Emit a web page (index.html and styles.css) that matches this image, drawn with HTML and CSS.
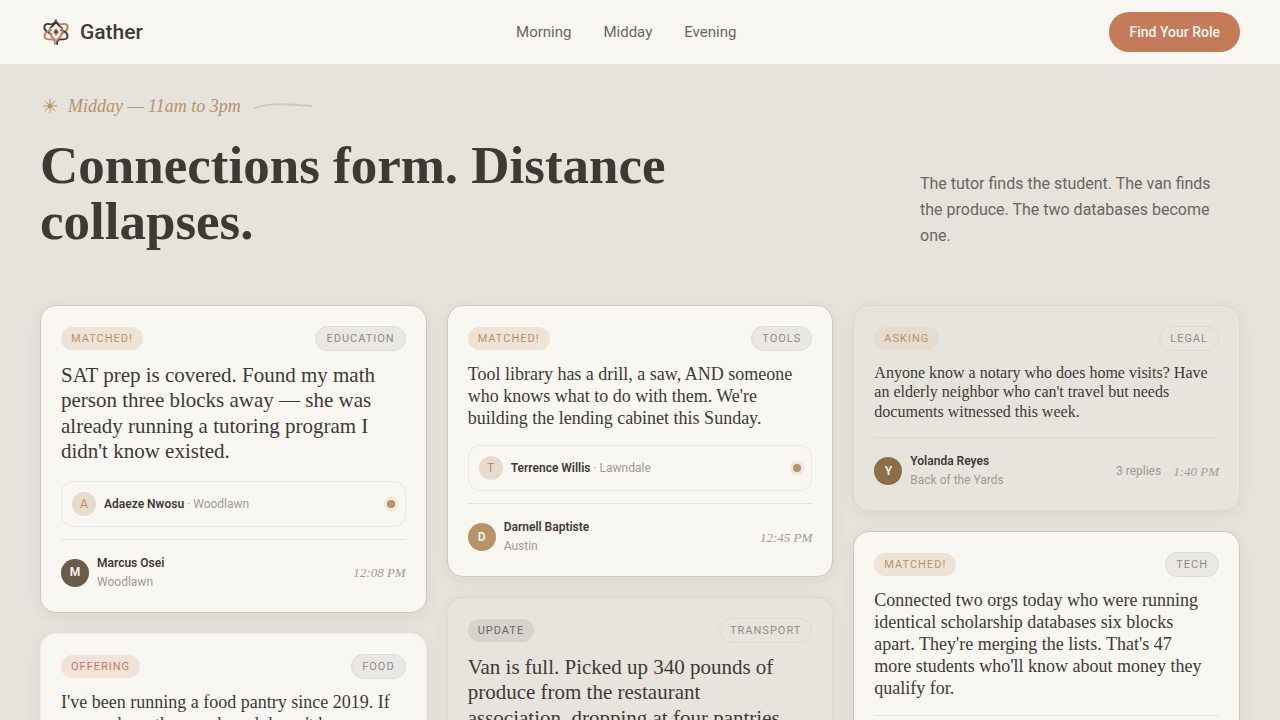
FILE: index.html
```html
<!DOCTYPE html>
<html lang="en">
<head>
<meta charset="utf-8">
<meta name="viewport" content="width=device-width, initial-scale=1">
<title>Gather</title>
<link rel="stylesheet" href="styles.css">
</head>
<body>
<header class="nav">
  <a class="brand" href="#">
    <svg class="brand-mark" viewBox="0 0 32 32" fill="none" stroke-width="1.8" stroke-linecap="round" aria-hidden="true">
      <path d="M16 4C15 8 12 9 9 8C4 7 3 12 6 15C7 16 9 17 11 18" stroke="#3d3a36"/>
      <path d="M16 4C17 8 20 9 23 8C28 7 29 12 26 15C25 16 23 17 21 18" stroke="#c47b5a"/>
      <path d="M11 14C7 15 3 18 5 22C7 25 12 22 14 24C15 25 15 26 15 28" stroke="#c47b5a"/>
      <path d="M21 14C25 15 29 18 27 22C25 25 20 22 18 24C17 25 17 26 17 28" stroke="#3d3a36"/>
      <path d="M10 12C12 11 14 9 16 6C18 9 20 11 22 12" stroke="#3d3a36"/>
      <path d="M10 12C9 15 10 18 11 20L15 24M22 12C23 15 22 18 21 20L17 24" stroke="#c47b5a"/>
      <path d="M16 12L19 16L16 20L13 16Z" fill="#c47b5a" stroke="none"/>
      <circle cx="16" cy="16" r="1.4" fill="#3d3a36"/>
    </svg>
    <span>Gather</span>
  </a>
  <nav class="links" aria-label="Times of day">
    <a href="#">Morning</a>
    <a href="#midday">Midday</a>
    <a href="#">Evening</a>
  </nav>
  <button class="cta" type="button">Find Your Role</button>
</header>

<main class="section" id="midday">
  <div class="eyebrow">
    <svg class="sun" viewBox="0 0 20 20" fill="none" stroke="#b8936a" stroke-linecap="round" aria-hidden="true">
      <circle cx="10" cy="10" r="2.4" fill="#b8936a" stroke="none"/>
      <path d="M10 3.500V16.500M3.500 10H16.500M5 5L15 15M5 15L15 5"/>
    </svg>
    <span>Midday — 11am to 3pm</span>
    <svg class="flourish" viewBox="0 0 60 8" fill="none" aria-hidden="true">
      <path d="M2 6C14 1 32 2 58 4" stroke="#d9c5b3" stroke-width="2" stroke-linecap="round"/>
    </svg>
  </div>
  <div class="heading">
    <h1>Connections form. Distance collapses.</h1>
    <p>The tutor finds the student. The van finds the produce. The two databases become one.</p>
  </div>

  <div class="board">
    <div class="column">
      <article class="card matched">
        <div class="tags"><span class="tag gold">Matched!</span><span class="topic">Education</span></div>
        <p class="quote large">SAT prep is covered. Found my math person three blocks away — she was already running a tutoring program I didn't know existed.</p>
        <div class="match"><span class="initial">A</span><span><strong>Adaeze Nwosu</strong> · Woodlawn</span><span class="dot"></span></div>
        <footer class="author"><span class="avatar umber">M</span><div><strong>Marcus Osei</strong><span>Woodlawn</span></div><time>12:08 PM</time></footer>
      </article>
      <article class="card">
        <div class="tags"><span class="tag clay">Offering</span><span class="topic">Food</span></div>
        <p class="quote">I've been running a food pantry since 2019. If anyone has other needs and doesn't have</p>
      </article>
    </div>

    <div class="column">
      <article class="card matched">
        <div class="tags"><span class="tag gold">Matched!</span><span class="topic">Tools</span></div>
        <p class="quote">Tool library has a drill, a saw, AND someone who knows what to do with them. We're building the lending cabinet this Sunday.</p>
        <div class="match"><span class="initial">T</span><span><strong>Terrence Willis</strong> · Lawndale</span><span class="dot"></span></div>
        <footer class="author"><span class="avatar ochre">D</span><div><strong>Darnell Baptiste</strong><span>Austin</span></div><time>12:45 PM</time></footer>
      </article>
      <article class="card quiet">
        <div class="tags"><span class="tag gray">Update</span><span class="topic">Transport</span></div>
        <p class="quote large inset">Van is full. Picked up 340 pounds of produce from the restaurant association, dropping at four pantries</p>
      </article>
    </div>

    <div class="column">
      <article class="card quiet">
        <div class="tags"><span class="tag gold">Asking</span><span class="topic">Legal</span></div>
        <p class="quote small">Anyone know a notary who does home visits? Have an elderly neighbor who can't travel but needs documents witnessed this week.</p>
        <footer class="author"><span class="avatar bronze">Y</span><div><strong>Yolanda Reyes</strong><span>Back of the Yards</span></div><span class="replies">3 replies</span><time>1:40 PM</time></footer>
      </article>
      <article class="card matched">
        <div class="tags"><span class="tag gold">Matched!</span><span class="topic">Tech</span></div>
        <p class="quote inset">Connected two orgs today who were running identical scholarship databases six blocks apart. They're merging the lists. That's 47 more students who'll know about money they qualify for.</p>
        <footer class="author"></footer>
      </article>
    </div>
  </div>
</main>
</body>
</html>
```
FILE: styles.css
```css
:root {
  --paper: #f9f7f2;
  --sand: #e6e2dc;
  --ink: #3d3a36;
  --muted: #6b6660;
  --faint: #a09b94;
  --gold: #b8936a;
  --clay: #c47b5a;
  --sans: "Roboto", "Liberation Sans", sans-serif;
  --serif: "Liberation Serif", serif;
}

* { box-sizing: border-box; }

body {
  margin: 0;
  background: var(--sand);
  color: var(--ink);
  font-family: var(--sans);
}

h1, p { margin: 0; }
a { color: inherit; text-decoration: none; }

.nav {
  display: flex;
  justify-content: space-between;
  align-items: center;
  padding: 12px 40px;
  background: #f8f7f2;
}

.brand {
  display: flex;
  align-items: center;
  gap: 8px;
  font-size: 21px;
  font-weight: 500;
}

.brand-mark { width: 32px; height: 32px; }

.links {
  display: flex;
  gap: 32px;
  color: var(--muted);
  font-size: 15px;
}

.cta {
  height: 40px;
  padding: 0 20px;
  border: 0;
  border-radius: 20px;
  background: var(--clay);
  color: var(--paper);
  font: 500 14px var(--sans);
}

.section { padding: 30px 40px 40px; }

.eyebrow {
  display: flex;
  align-items: center;
  gap: 8px;
  height: 24px;
  margin-bottom: 19px;
  color: var(--gold);
  font: italic 18px/24px var(--serif);
}

.sun { width: 20px; height: 20px; }
.flourish { width: 60px; height: 8px; margin-left: 4px; }

.heading {
  display: flex;
  justify-content: space-between;
  align-items: flex-end;
  gap: 40px;
  margin-bottom: 56px;
}

.heading h1 {
  max-width: 700px;
  font: 700 53px/56px var(--serif);
}

.heading p {
  width: 320px;
  padding-right: 16px;
  color: var(--muted);
  font-size: 16px;
  line-height: 26px;
}

.board {
  display: grid;
  grid-template-columns: repeat(3, minmax(0, 1fr));
  align-items: start;
  gap: 20px;
}

.column {
  display: flex;
  flex-direction: column;
  gap: 20px;
}

.card {
  padding: 20px;
  border: 1px solid #f3efe8;
  border-radius: 16px;
  background: var(--paper);
  box-shadow: 0 4px 16px rgba(61, 58, 54, 0.07);
}

.card.matched { border-color: #d9c5b2; }
.card.quiet { border-color: #dcd7cf; background: #e7e4dd; }

.tags {
  display: flex;
  justify-content: space-between;
  align-items: center;
  margin-bottom: 12px;
  font-size: 11px;
  line-height: 15px;
  letter-spacing: 1px;
  text-transform: uppercase;
}

.tag, .topic { border-radius: 16px; }
.tag { padding: 4px 10px; }
.gold { background: #eee3d7; color: var(--gold); }
.clay { background: #f2e3da; color: var(--clay); }
.gray { background: #d6d3cd; color: var(--muted); }

.topic {
  padding: 4px 10px;
  border: 1px solid #dedbd6;
  background: #eae8e4;
  color: #918c86;
}

.quiet .topic { border-color: #dedad3; background: transparent; }
.quiet .gold { background: #e5dbcf; }

.quote {
  margin-bottom: 16px;
  font: 18px/22px var(--serif);
}

.quote.large { font-size: 21px; line-height: 1.21; }
.quote.small { font-size: 16px; line-height: 1.21; }
.quote.inset { padding-right: 12px; }

.match {
  display: flex;
  align-items: center;
  gap: 8px;
  margin-bottom: 12px;
  padding: 10px;
  border: 1px solid #ebe8e1;
  border-radius: 12px;
  color: var(--faint);
  font-size: 12px;
}

.match strong, .author strong { color: var(--ink); font-weight: 600; }

.initial, .avatar {
  display: grid;
  place-items: center;
  border-radius: 50%;
  font-size: 12px;
}

.initial {
  width: 24px;
  height: 24px;
  background: #e8dacc;
  color: var(--gold);
}

.dot {
  width: 8px;
  height: 8px;
  margin-left: auto;
  border-radius: 50%;
  background: var(--gold);
  box-shadow: 0 0 0 3px #f0e7dc;
}

.author {
  display: flex;
  align-items: center;
  gap: 8px;
  min-height: 53px;
  padding-top: 14px;
  border-top: 1px solid #e8e5de;
  color: var(--faint);
  font-size: 12px;
  line-height: 19px;
}

.quiet .author { border-color: #dcd9d2; }
.author div { display: grid; margin-right: auto; }

.avatar {
  width: 28px;
  height: 28px;
  color: var(--paper);
  font-weight: 600;
}

.umber { background: #6b5b4b; }
.ochre { background: #b8936a; }
.bronze { background: #8b6f47; }

.author time { font: italic 13px/19px var(--serif); }
.replies { margin-right: 4px; }
```
